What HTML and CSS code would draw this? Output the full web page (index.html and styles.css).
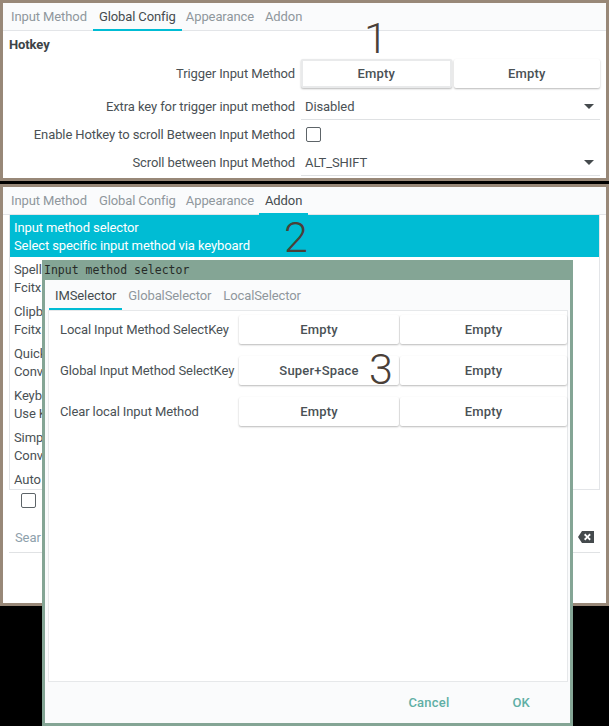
FILE: index.html
```html
<!DOCTYPE html>
<html lang="en">

<head>
  <meta charset="UTF-8">
  <meta name="viewport" content="width=device-width, initial-scale=1.0">
  <title>Fcitx Config</title>
  <link rel="stylesheet" href="styles.css">
</head>

<body>
  <div class="desktop">

    <div class="window window-top">
      <div class="tabs">
        <span class="tab">Input Method</span>
        <span class="tab tab-on">Global Config</span>
        <span class="tab">Appearance</span>
        <span class="tab">Addon</span>
      </div>
      <div class="hotkey-title">Hotkey</div>
      <div class="form">
        <div class="row row-keys">
          <label>Trigger Input Method</label>
          <div class="keys">
            <button class="key key-focus">Empty</button>
            <button class="key">Empty</button>
          </div>
        </div>
        <div class="row row-combo">
          <label>Extra key for trigger input method</label>
          <div class="combo"><span>Disabled</span><i class="arrow"></i></div>
        </div>
        <div class="row row-check">
          <label>Enable Hotkey to scroll Between Input Method</label>
          <i class="checkbox"></i>
        </div>
        <div class="row row-combo">
          <label>Scroll between Input Method</label>
          <div class="combo"><span>ALT_SHIFT</span><i class="arrow"></i></div>
        </div>
      </div>
    </div>

    <div class="window window-addon">
      <div class="tabs">
        <span class="tab">Input Method</span>
        <span class="tab">Global Config</span>
        <span class="tab">Appearance</span>
        <span class="tab tab-on">Addon</span>
      </div>
      <div class="addon-list">
        <div class="addon addon-on">Input method selector<br>Select specific input method via keyboard</div>
        <div class="addon">Spell<br>Fcitx</div>
        <div class="addon">Clipb<br>Fcitx</div>
        <div class="addon">Quick<br>Conv</div>
        <div class="addon">Keyb<br>Use K</div>
        <div class="addon">Simp<br>Conv</div>
        <div class="addon">Auto</div>
      </div>
      <div class="advanced"><i class="checkbox"></i></div>
      <div class="search">
        <span>Sear</span>
        <svg class="clear-icon" width="16" height="12" viewBox="0 0 16 12">
          <path fill="#454a4d" fill-rule="evenodd" d="M4 0H16V12H4L0 6ZM7.3 2.6 6 3.9 8.1 6 6 8.1 7.3 9.4 9.4 7.3 11.5 9.4 12.8 8.1 10.7 6 12.8 3.9 11.5 2.6 9.4 4.7Z"/>
        </svg>
      </div>
    </div>

    <div class="dialog">
      <div class="dialog-title">Input method selector</div>
      <div class="dialog-body">
        <div class="tabs tabs-dialog">
          <span class="tab tab-on">IMSelector</span>
          <span class="tab">GlobalSelector</span>
          <span class="tab">LocalSelector</span>
        </div>
        <div class="selector-page">
          <div class="selector-row">
            <label>Local Input Method SelectKey</label>
            <div class="keys">
              <button class="key">Empty</button>
              <button class="key">Empty</button>
            </div>
          </div>
          <div class="selector-row">
            <label>Global Input Method SelectKey</label>
            <div class="keys">
              <button class="key">Super+Space</button>
              <button class="key">Empty</button>
            </div>
          </div>
          <div class="selector-row">
            <label>Clear local Input Method</label>
            <div class="keys">
              <button class="key">Empty</button>
              <button class="key">Empty</button>
            </div>
          </div>
        </div>
        <div class="dialog-actions">
          <button class="flat">Cancel</button>
          <button class="flat">OK</button>
        </div>
      </div>
    </div>

    <span class="mark mark-1">1</span>
    <span class="mark mark-2">2</span>
    <span class="mark mark-3">3</span>
  </div>
</body>

</html>
```

FILE: styles.css
```css
* {
  box-sizing: border-box;
}

body {
  margin: 0;
  background-color: #000;
  font-family: 'Roboto', sans-serif;
  font-size: 13px;
  letter-spacing: -0.1px;
  color: #4a5155;
}

.desktop {
  position: relative;
  width: 609px;
  height: 726px;
  overflow: hidden;
  display: flex;
  flex-direction: column;
  gap: 3px;
}

.window {
  border: 3px solid #988878;
  background-color: #fff;
}

.window-top {
  height: 181px;
}

.window-addon {
  height: 422px;
}

/* tabs */
.tabs {
  display: flex;
  height: 28px;
  padding-left: 2px;
  background-color: #fafbfc;
  border-bottom: 1px solid #e3e5e8;
}

.tab {
  height: 28px;
  padding: 0 6px;
  line-height: 27px;
  color: #8f979c;
}

.window .tab:nth-child(3) {
  padding: 0 5px 0 4px;
}

.tab-on {
  color: #454b4f;
  border-bottom: 2px solid #00bcd4;
}

.hotkey-title {
  padding: 6px 6px 0;
  height: 27px;
  font-weight: bold;
  color: #3c4347;
}

/* form rows */
.form {
  display: flex;
  flex-direction: column;
}

.row {
  display: flex;
  align-items: center;
}

.row label {
  width: 292px;
  text-align: right;
  flex: none;
}

.row-keys {
  height: 30px;
}

.row-keys .keys {
  width: 299px;
  margin-left: 6px;
  gap: 2px;
}

.row-combo {
  height: 28px;
}

.row-keys + .row-combo {
  margin-top: 4px;
}

.row-check {
  height: 28px;
}

.combo {
  display: flex;
  align-items: center;
  justify-content: space-between;
  width: 299px;
  height: 28px;
  margin-left: 6px;
  padding: 1px 6px 0 4px;
  border-bottom: 1px solid #dfe1e3;
}

.arrow {
  width: 0;
  height: 0;
  border-left: 5px solid transparent;
  border-right: 5px solid transparent;
  border-top: 5px solid #454a4d;
}

.checkbox {
  display: block;
  width: 15px;
  height: 15px;
  border: 1.5px solid #5d6468;
  border-radius: 2px;
  background-color: #fff;
}

.row-check .checkbox {
  margin-left: 11px;
}

/* key buttons */
.keys {
  display: flex;
  gap: 1px;
  flex: none;
}

.key {
  flex: 1;
  height: 29px;
  padding: 0;
  border: 0;
  border-radius: 2px;
  background-color: #fff;
  box-shadow: 0 1px 2px rgba(0, 0, 0, 0.28);
  font-family: inherit;
  font-size: 13px;
  font-weight: 500;
  letter-spacing: 0.2px;
  color: #4a5155;
}

.key-focus {
  border: 2px solid #e9eaeb;
}

/* addon list */
.addon-list {
  height: 275px;
  margin: 0 6px;
  border: 1px solid #e3e5e8;
  border-top: 0;
  overflow: hidden;
}

.addon {
  padding: 4px 4px 2px;
  line-height: 18px;
}

.addon-on {
  background-color: #00bcd4;
  color: #fff;
}

.advanced {
  padding: 3px 18px;
  height: 38px;
}

.search {
  display: flex;
  align-items: center;
  justify-content: space-between;
  height: 25px;
  margin: 0 6px;
  padding: 0 6px 6px 6px;
  border-bottom: 1px solid #e0e2e4;
  color: #8ea0ab;
}

/* dialog lies over the addon window */
.dialog {
  position: absolute;
  left: 42px;
  top: 260px;
  width: 531px;
  height: 466px;
  border: 3px solid #84a595;
  border-top: 0;
  background-color: #84a595;
  display: flex;
  flex-direction: column;
}

.dialog-title {
  height: 20px;
  line-height: 20px;
  margin-left: -1px;
  font-family: 'DejaVu Sans Mono', monospace;
  font-size: 11.5px;
  letter-spacing: 0;
  color: #272b28;
}

.dialog-body {
  height: 443px;
  background-color: #fafbfc;
  display: flex;
  flex-direction: column;
}

.tabs-dialog {
  height: 30px;
  flex: none;
  border-bottom: 0;
  padding-left: 4px;
}

.tabs-dialog .tab {
  height: 30px;
  line-height: 31px;
}

.selector-page {
  height: 372px;
  margin: 0 2px 0 3px;
  padding-top: 4px;
  background-color: #fff;
  border: 1px solid #e6e8ea;
  display: flex;
  flex-direction: column;
  gap: 12px;
}

.selector-row {
  display: flex;
  align-items: center;
  padding-left: 11px;
}

.selector-row label {
  width: 179px;
  flex: none;
}

.selector-row .keys {
  width: 328px;
}

.selector-row .key:first-child {
  flex: 0 0 160px;
}

.dialog-actions {
  flex: 1;
  display: flex;
  justify-content: flex-end;
  align-items: center;
  gap: 63px;
  padding-right: 40px;
}

.flat {
  padding: 0;
  border: 0;
  background: none;
  font-family: inherit;
  font-size: 13px;
  font-weight: 500;
  letter-spacing: 0.2px;
  color: #5fafa5;
}

/* the numbers written over the screenshot */
.mark {
  position: absolute;
  font-family: 'Roboto', sans-serif;
  font-size: 43px;
  font-weight: 300;
  line-height: 43px;
  letter-spacing: 0;
  color: #4a4038;
}

.mark-1 {
  left: 364px;
  top: 17px;
}

.mark-2 {
  left: 284px;
  top: 216px;
}

.mark-3 {
  left: 369px;
  top: 348px;
}
```
